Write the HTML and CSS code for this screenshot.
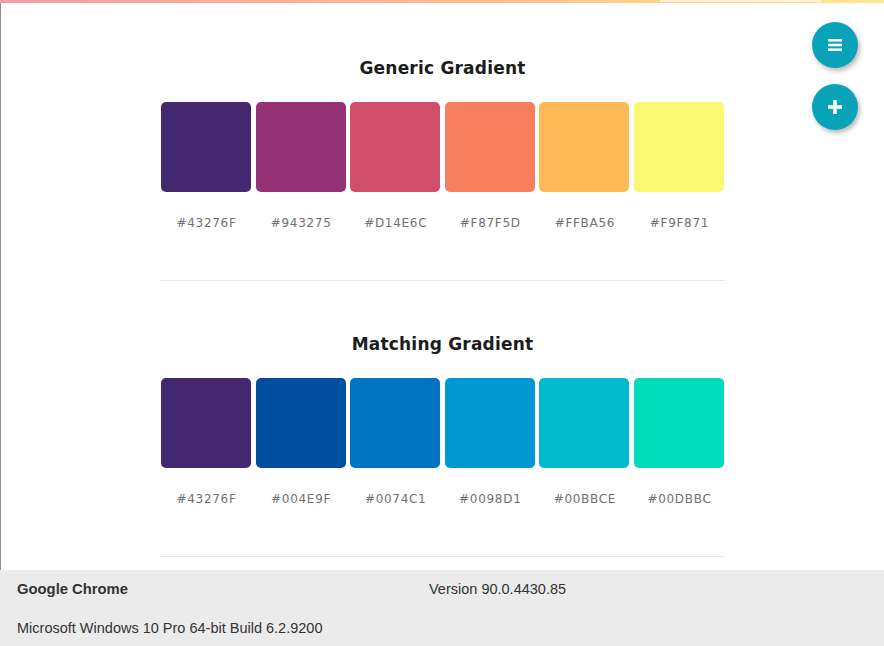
FILE: index.html
```html
<!DOCTYPE html>
<html>
<head>
<meta charset="utf-8">
<link rel="stylesheet" href="styles.css">
</head>
<body>
<div class="topbar"><span class="topbar-mark"></span></div>
<div class="viewport">
  <main class="content">
    <section class="palette">
      <h2 class="palette-title">Generic Gradient</h2>
      <div class="swatches">
        <div class="swatch"><div class="chip c1"></div><span class="hex">#43276F</span></div>
        <div class="swatch"><div class="chip c2"></div><span class="hex">#943275</span></div>
        <div class="swatch"><div class="chip c3"></div><span class="hex">#D14E6C</span></div>
        <div class="swatch"><div class="chip c4"></div><span class="hex">#F87F5D</span></div>
        <div class="swatch"><div class="chip c5"></div><span class="hex">#FFBA56</span></div>
        <div class="swatch"><div class="chip c6"></div><span class="hex">#F9F871</span></div>
      </div>
    </section>
    <section class="palette">
      <h2 class="palette-title">Matching Gradient</h2>
      <div class="swatches">
        <div class="swatch"><div class="chip c1"></div><span class="hex">#43276F</span></div>
        <div class="swatch"><div class="chip m2"></div><span class="hex">#004E9F</span></div>
        <div class="swatch"><div class="chip m3"></div><span class="hex">#0074C1</span></div>
        <div class="swatch"><div class="chip m4"></div><span class="hex">#0098D1</span></div>
        <div class="swatch"><div class="chip m5"></div><span class="hex">#00BBCE</span></div>
        <div class="swatch"><div class="chip m6"></div><span class="hex">#00DBBC</span></div>
      </div>
    </section>
  </main>
  <div class="fabs">
    <button class="fab" aria-label="Menu">
      <svg width="16" height="14" viewBox="0 0 16 14"><rect x="1" y="1" width="14" height="2.6" fill="#fff"/><rect x="1" y="5.7" width="14" height="2.6" fill="#fff"/><rect x="1" y="10.4" width="14" height="2.6" fill="#fff"/></svg>
    </button>
    <button class="fab" aria-label="Add">
      <svg width="16" height="16" viewBox="0 0 16 16"><rect x="6.2" y="1" width="3.6" height="14" fill="#fff"/><rect x="1" y="6.2" width="14" height="3.6" fill="#fff"/></svg>
    </button>
  </div>
</div>
<footer class="sysinfo">
  <div class="sys-row">
    <span class="sys-name">Google Chrome</span>
    <span class="sys-version">Version 90.0.4430.85</span>
  </div>
  <div class="sys-row">
    <span class="sys-os">Microsoft Windows 10 Pro 64-bit Build 6.2.9200</span>
  </div>
</footer>
</body>
</html>
```

FILE: styles.css
```css
* { box-sizing: border-box; }
html, body { margin: 0; padding: 0; }
body {
  width: 884px;
  height: 646px;
  overflow: hidden;
  display: flex;
  flex-direction: column;
  background: #fff;
  font-family: "DejaVu Sans", sans-serif;
}
.topbar {
  height: 3px;
  flex: none;
  position: relative;
  background: linear-gradient(90deg, #f59aa8 0%, #ffa99a 25%, #ffbd8c 55%, #ffd98a 80%, #fde98e 100%);
}
.topbar-mark {
  position: absolute;
  left: 660px;
  top: 0;
  width: 161px;
  height: 2px;
  background: rgba(255, 255, 255, 0.6);
}
.viewport {
  flex: 1;
  min-height: 0;
  overflow: hidden;
  border-left: 1px solid #8f8f99;
  display: flex;
  justify-content: center;
  position: relative;
}
.content {
  width: 565px;
}
.palette {
  padding: 52px 0 47px;
  border-bottom: 1px solid #e8e8ee;
}
.palette + .palette {
  padding-top: 50px;
}
.palette-title {
  margin: 0 0 21px;
  text-align: center;
  font-size: 17px;
  line-height: 26px;
  font-weight: 700;
  color: #1c1c1c;
  letter-spacing: 0.2px;
}
.swatches {
  display: grid;
  grid-template-columns: repeat(6, 90px);
  justify-content: center;
  column-gap: 4.6px;
}
.swatch {
  display: flex;
  flex-direction: column;
  align-items: center;
}
.palette + .palette .swatches {
  margin-top: 1px;
}
.chip {
  width: 100%;
  height: 90px;
  border-radius: 5px;
}
.hex {
  margin-top: 21px;
  font-size: 12px;
  line-height: 20px;
  letter-spacing: 0.7px;
  color: #707070;
  padding-left: 1px;
}
.c1 { background: #43276F; }
.c2 { background: #943275; }
.c3 { background: #D14E6C; }
.c4 { background: #F87F5D; }
.c5 { background: #FFBA56; }
.c6 { background: #F9F871; }
.m2 { background: #004E9F; }
.m3 { background: #0074C1; }
.m4 { background: #0098D1; }
.m5 { background: #00BBCE; }
.m6 { background: #00DBBC; }

.fabs {
  position: absolute;
  top: 19px;
  right: 26px;
  display: flex;
  flex-direction: column;
  gap: 16px;
}
.fab {
  width: 46px;
  height: 46px;
  border-radius: 50%;
  border: none;
  padding: 0;
  background: #08a2b9;
  box-shadow: 2px 3px 5px rgba(0, 0, 0, 0.28);
  display: flex;
  align-items: center;
  justify-content: center;
}
.sysinfo {
  height: 76px;
  flex: none;
  background: #ebebeb;
  padding: 10px 17px 0;
  font-family: "Liberation Sans", Arial, sans-serif;
  font-size: 14.5px;
  color: #333;
  display: flex;
  flex-direction: column;
  gap: 21px;
}
.sys-row {
  display: flex;
  line-height: 18px;
}
.sys-name {
  font-weight: 700;
  font-size: 14.8px;
  width: 412px;
}
```
